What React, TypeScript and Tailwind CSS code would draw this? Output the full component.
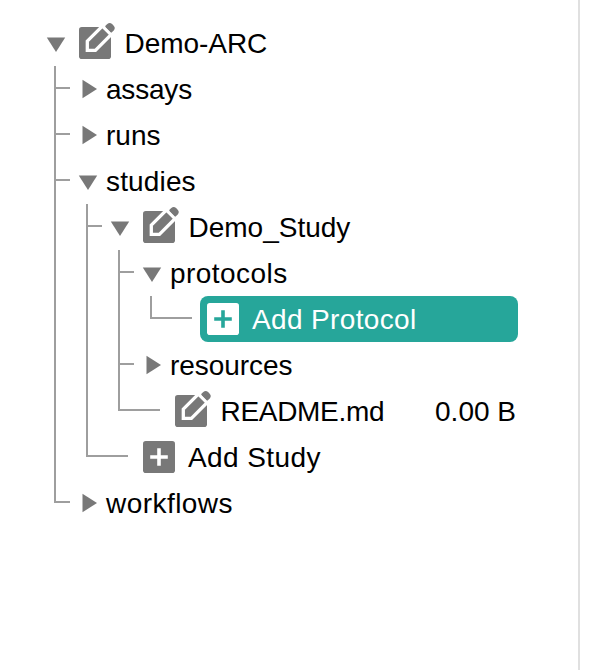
import type { ReactNode } from "react";

function Arrow({ open }: { open: boolean }) {
  return (
    <svg viewBox="0 0 36 46" className="h-[46px] w-9 shrink-0 fill-[#787878]">
      {open ? <path d="M8.8 17.5H27.2L18 32Z" /> : <path d="M12.5 13.8V32.2L27 23Z" />}
    </svg>
  );
}

function EditIcon() {
  return (
    <svg viewBox="0 0 36 46" className="h-[46px] w-9 shrink-0">
      <rect x="0" y="7" width="32" height="32" rx="2.8" fill="#787878" />
      <path d="M8.3 30.3V21.2L23.4 6.1L32 14.7L16.4 30.3Z" fill="#787878" stroke="#fff" strokeWidth="3.3" />
      <path d="M26 6.3L28.3 4.1Q30.7 2 33.1 4.1L34.7 5.7Q36.8 8.1 34.7 10.4L32.3 12.7Z" fill="#787878" />
    </svg>
  );
}

function AddIcon({ inverse = false }: { inverse?: boolean }) {
  return (
    <svg viewBox="0 0 36 46" className="h-[46px] w-9 shrink-0">
      <rect x="0" y="7" width="32" height="32" rx="2.8" fill={inverse ? "#fff" : "#787878"} />
      <path d="M16 14.2V31.8M7.2 23H24.8" stroke={inverse ? "#26a69a" : "#fff"} strokeWidth="3.6" />
    </svg>
  );
}

interface FolderProps {
  name: string;
  open?: boolean;
  icon?: ReactNode;
  spacing?: string;
  children?: ReactNode;
}

function Folder({ name, open = false, icon, spacing = "", children }: FolderProps) {
  return (
    <div>
      <div className="flex h-[46px] items-center">
        <Arrow open={open} />
        {icon && <div className="mr-[9.5px] ml-[5px] flex">{icon}</div>}
        <span className={spacing}>{name}</span>
      </div>
      {children && <ul className="pl-4">{children}</ul>}
    </div>
  );
}

function Branch({ last = false, leaf = false, children }: { last?: boolean; leaf?: boolean; children: ReactNode }) {
  return (
    <li className="flex">
      <div className={leaf ? "flex w-[42px] shrink-0 flex-col" : "flex w-4 shrink-0 flex-col"}>
        <div className="h-[23px] border-b-2 border-l-2 border-[#9e9e9e]" />
        {!last && <div className="flex-1 border-l-2 border-[#9e9e9e]" />}
      </div>
      {children}
    </li>
  );
}

export default function App() {
  return (
    <div className="h-[670px] w-[596px] overflow-hidden bg-white">
      <div className="h-full w-[580px] border-r-2 border-[#e0e0e0] pt-5 pl-[38px] font-['Liberation_Sans',Arial,sans-serif] text-[28px] leading-[46px] whitespace-nowrap text-black [&_span]:pt-px">
        <Folder name="Demo-ARC" open icon={<EditIcon />} spacing="tracking-[-0.05px]">
          <Branch><Folder name="assays" spacing="tracking-[-0.2px]" /></Branch>
          <Branch><Folder name="runs" /></Branch>
          <Branch>
            <Folder name="studies" open spacing="tracking-[0.15px]">
              <Branch>
                <Folder name="Demo_Study" open icon={<EditIcon />}>
                  <Branch>
                    <Folder name="protocols" open spacing="tracking-[0.45px]">
                      <Branch last leaf>
                        <div className="ml-2 flex h-[46px] w-[318px] items-center rounded-lg bg-[#26a69a] pl-[7px] text-white">
                          <AddIcon inverse />
                          <span className="ml-[9px] tracking-[0.36px]">Add Protocol</span>
                        </div>
                      </Branch>
                    </Folder>
                  </Branch>
                  <Branch><Folder name="resources" spacing="tracking-[-0.05px]" /></Branch>
                  <Branch last leaf>
                    <div className="flex h-[46px] w-[356px] items-center pl-[15px]">
                      <EditIcon />
                      <span className="ml-[9.5px] tracking-[-0.3px]">README.md</span>
                      <span className="ml-auto">0.00 B</span>
                    </div>
                  </Branch>
                </Folder>
              </Branch>
              <Branch last leaf>
                <div className="flex h-[46px] items-center pl-[15px]">
                  <AddIcon />
                  <span className="ml-[9px] tracking-[0.4px]">Add Study</span>
                </div>
              </Branch>
            </Folder>
          </Branch>
          <Branch last><Folder name="workflows" spacing="tracking-[0.45px]" /></Branch>
        </Folder>
      </div>
    </div>
  );
}
